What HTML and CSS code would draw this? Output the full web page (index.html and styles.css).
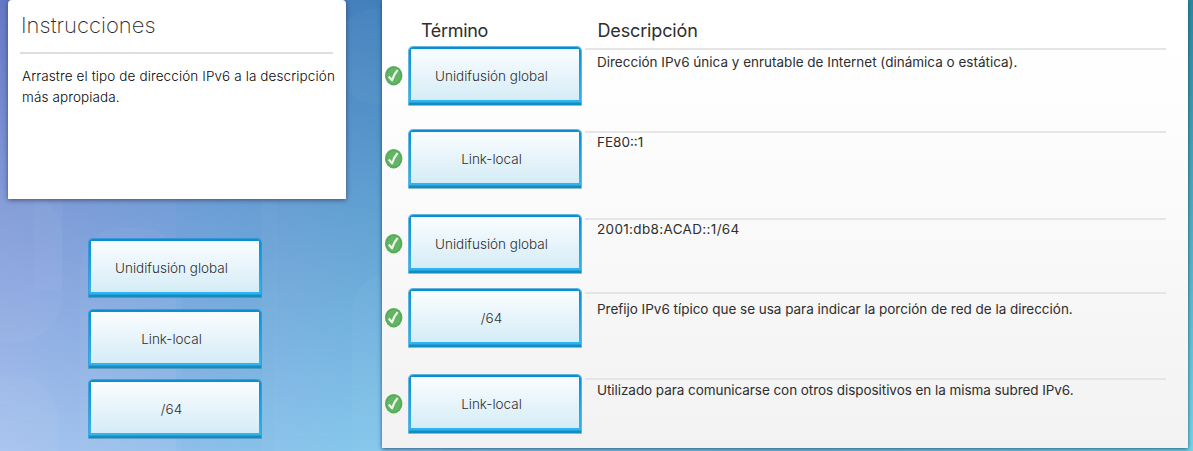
FILE: index.html
```html
<!DOCTYPE html>
<html lang="es">
<head>
<meta charset="utf-8">
<title>Direcciones IPv6</title>
<link rel="stylesheet" href="styles.css">
</head>
<body>
<div class="sky"></div>
<svg class="backdrop" viewBox="0 0 1193 451" aria-hidden="true">
  <g fill="#fff" fill-opacity=".03">
    <rect x="-60" y="190" width="122" height="152" rx="45"/>
    <rect x="34" y="190" width="28" height="100"/>
    <rect x="-50" y="375" width="108" height="160" rx="45"/>
    <rect x="80" y="228" width="102" height="300" rx="40"/>
    <rect x="352" y="272" width="90" height="250" rx="40"/>
    <circle cx="380" cy="56" r="48"/>
    <rect x="262" y="190" width="14" height="261"/>
  </g>
  <rect x="176" y="190" width="99" height="261" fill="#2f9ec4" fill-opacity=".05"/>
</svg>
<svg width="0" height="0" class="defs" aria-hidden="true">
  <symbol id="check" viewBox="0 0 18 20">
    <ellipse cx="8.7" cy="9.7" rx="8.7" ry="9.7" fill="#57ad57"/>
    <ellipse cx="8.7" cy="9.7" rx="6.8" ry="7.8" fill="#63b464"/>
    <path d="M3.8 10.5 7 14.3C8.3 10.3 10 7.1 12.7 4.1" fill="none" stroke="#edf6ea" stroke-width="2.2" stroke-linejoin="round"/>
  </symbol>
</svg>
<div class="page">
  <aside class="side">
    <section class="instructions">
      <h1 class="title">Instrucciones</h1>
      <p class="intro">Arrastre el tipo de dirección IPv6 a la descripción<br>más apropiada.</p>
    </section>
    <div class="choices">
      <div class="tile"><span>Unidifusión global</span></div>
      <div class="tile gap-wide"><span>Link-local</span></div>
      <div class="tile"><span>/64</span></div>
    </div>
  </aside>
  <main class="panel">
    <div class="head"><h2 class="term">Término</h2><h2 class="desc">Descripción</h2></div>
    <div class="row row-a">
      <svg class="check"><use href="#check"/></svg>
      <div class="tile"><span>Unidifusión global</span></div>
      <p class="text"><span>Dirección IPv6 única y enrutable de Internet (dinámica o estática).</span></p>
    </div>
    <div class="row row-b">
      <svg class="check"><use href="#check"/></svg>
      <div class="tile"><span>Link-local</span></div>
      <p class="text"><span>FE80::1</span></p>
    </div>
    <div class="row row-c">
      <svg class="check"><use href="#check"/></svg>
      <div class="tile"><span>Unidifusión global</span></div>
      <p class="text"><span>2001:db8:ACAD::1/64</span></p>
    </div>
    <div class="row row-d">
      <svg class="check"><use href="#check"/></svg>
      <div class="tile"><span>/64</span></div>
      <p class="text"><span>Prefijo IPv6 típico que se usa para indicar la porción de red de la dirección.</span></p>
    </div>
    <div class="row row-e">
      <svg class="check"><use href="#check"/></svg>
      <div class="tile"><span>Link-local</span></div>
      <p class="text"><span>Utilizado para comunicarse con otros dispositivos en la misma subred IPv6.</span></p>
    </div>
  </main>
</div>
</body>
</html>
```
FILE: styles.css
```css
* { box-sizing: border-box; }
body {
  margin: 0;
  width: 1193px;
  height: 451px;
  overflow: hidden;
  font: 300 13.5px/21px Inter, "Liberation Sans", sans-serif;
  color: #2e2e2e;
  background: linear-gradient(90deg, #a9c5f0 0, #95bfeb 170px, #84c8ec 380px, #75bfdf 800px, #76d6e9 1193px);
}
h1, h2, p { margin: 0; font-weight: 400; }
.sky, .backdrop { position: absolute; left: 0; top: 0; width: 1193px; height: 451px; }
/* darker upper sky, fading out towards the bottom edge */
.sky {
  background: linear-gradient(90deg, #6478c4 0, #5a83c8 170px, #417fbb 380px, #317fae 800px, #2b8a9f 1193px);
  mask-image: linear-gradient(#000, transparent);
}
.defs { position: absolute; }
.page { position: relative; display: flex; height: 451px; }
.side { width: 382px; padding-left: 8px; }
.instructions {
  width: 338px;
  height: 199px;
  padding: 11px 13px 0 12px;
  background: #fff;
  border-radius: 4px 4px 0 0;
  box-shadow: 0 1px 5px rgba(45,55,85,.75);
}
.title {
  height: 43px;
  padding-left: 1px;
  border-bottom: 2px solid #dedede;
  font-size: 22px;
  font-weight: 200;
  line-height: 28px;
}
.intro {
  padding: 12px 0 0 2px;
  color: #080808;
  font-weight: 300;
  letter-spacing: .11px;
  white-space: nowrap;
}
.choices { padding: 39px 0 0 80px; }
.choices .tile { margin-bottom: 10px; }
.choices .gap-wide { margin-top: 11px; }
.tile {
  width: 174px;
  height: 60px;
  padding: 0 7px 0 0;
  display: flex;
  align-items: center;
  justify-content: center;
  border-radius: 5px 5px 1px 1px;
  border: 1px solid transparent;
  border-color: rgba(22,143,210,.65) rgba(22,143,210,.65) rgba(30,130,165,.5);
  background:
    linear-gradient(#fafdff, #d5ecf6) 2px 2px / 168px 51px no-repeat padding-box,
    linear-gradient(#078ed6 0, #2fb4ef 52px, #2fb4ef 55px, #168bc0 56px) padding-box;
  white-space: nowrap;
}
.panel {
  width: 806px;
  height: 448px;
  background: linear-gradient(#fff 0, #fefefe 95px, #f2f2f2 448px);
  box-shadow: 0 1px 4px rgba(20,60,90,.8);
}
.head { display: flex; height: 46px; padding: 20px 0 0 39px; }
.head h2 { font-size: 18px; line-height: 22px; letter-spacing: -.15px; white-space: nowrap; }
.head .term { width: 176.5px; letter-spacing: -.35px; }
.row { display: flex; align-items: flex-start; padding-left: 3px; }
.check { width: 18px; height: 20px; margin: 20px 5px 0 0; }
.text {
  width: 581px;
  margin: 2px 0 0 3px;
  padding-left: 12px;
  border-top: 2px solid #e5e5e5;
  white-space: nowrap;
}
.text span { display: block; }
.row-a { height: 83px; }
.row-b { height: 85px; }
.row-c { height: 74px; }
.row-d { height: 86px; }
.row-c .text, .row-d .text, .row-e .text { margin-top: 4px; }
.row-a .text { padding-top: 2px; }
.row-b .text span, .row-c .text span { margin-top: -1px; }
.row-c .text span { letter-spacing: .34px; }
.row-d .text { padding-top: 5px; }
.row-d .text span { letter-spacing: -.02px; }
.row-e .text span { letter-spacing: -.06px; }
```
